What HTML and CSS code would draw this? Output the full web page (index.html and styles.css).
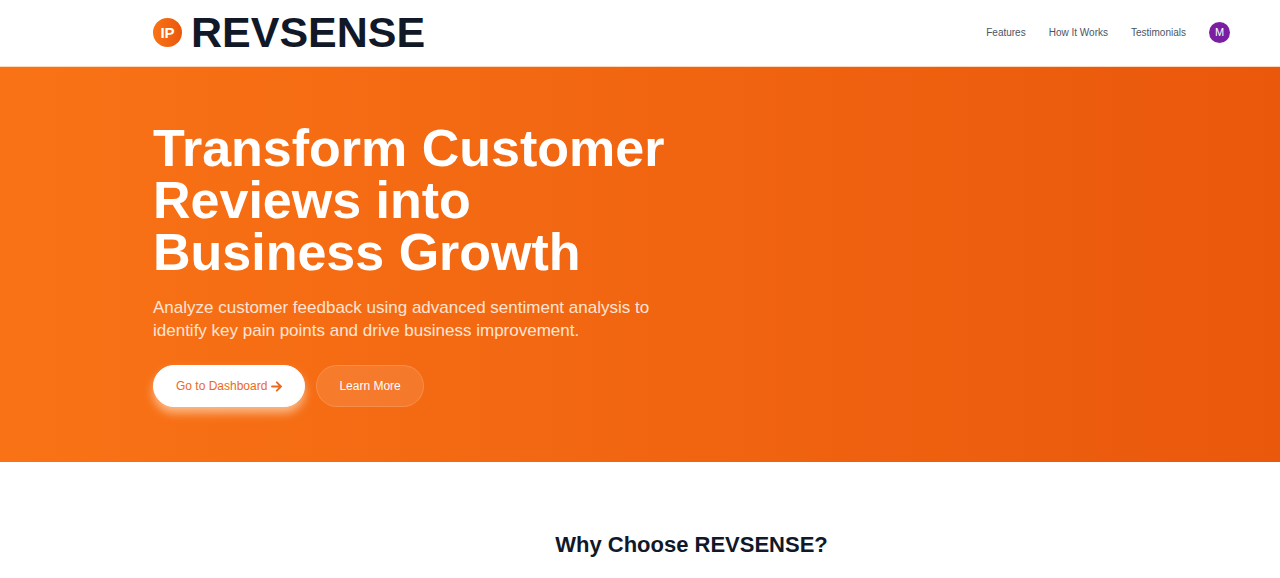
FILE: index.html
```html
<!DOCTYPE html>
<html lang="en">
<head>
  <meta charset="utf-8">
  <meta name="viewport" content="width=device-width, initial-scale=1">
  <title>REVSENSE</title>
  <link rel="stylesheet" href="styles.css">
</head>
<body>
  <header class="site-header">
    <a class="brand" href="#">
      <span class="brand-mark">IP</span>
      <span class="brand-name">REVSENSE</span>
    </a>
    <nav class="site-nav" aria-label="Main">
      <a href="#features">Features</a>
      <a href="#how">How It Works</a>
      <a href="#testimonials">Testimonials</a>
      <button class="avatar" type="button" aria-label="Account, M">M</button>
    </nav>
  </header>
  <main>
    <section class="hero">
      <div class="hero-copy">
        <h1>Transform Customer Reviews into Business Growth</h1>
        <p>Analyze customer feedback using advanced sentiment analysis to identify key pain points and drive business improvement.</p>
        <div class="actions">
          <a class="button button-primary" href="#dashboard">Go to Dashboard
            <svg class="arrow" viewBox="0 0 11 11" aria-hidden="true"><path d="M1 5.500h9M5.800 1.300 10 5.500l-4.200 4.200"/></svg>
          </a>
          <a class="button button-ghost" href="#features">Learn More</a>
        </div>
      </div>
    </section>
    <section class="features" id="features">
      <h2>Why Choose REVSENSE?</h2>
    </section>
  </main>
</body>
</html>
```
FILE: styles.css
```css
* {
  box-sizing: border-box;
}

body {
  margin: 0;
  background: #fff;
  color: #111827;
  font-family: "Liberation Sans", Arial, sans-serif;
}

a {
  color: inherit;
  text-decoration: none;
}

.site-header,
.hero,
.features {
  padding-left: 153px;
  padding-right: 50px;
}

.site-header {
  display: flex;
  align-items: center;
  justify-content: space-between;
  padding-top: 8px;
  padding-bottom: 10px;
  border-bottom: 1px solid #fcd9bd;
}

.brand {
  display: flex;
  align-items: center;
  gap: 9px;
}

.brand-mark {
  display: grid;
  place-items: center;
  width: 29px;
  height: 29px;
  border-radius: 50%;
  background: linear-gradient(90deg, #f97316, #ea580c);
  color: #fff;
  font-size: 15px;
  font-weight: 700;
}

.brand-name {
  font-size: 43px;
  font-weight: 700;
  line-height: 48px;
}

.site-nav {
  display: flex;
  align-items: center;
  gap: 23px;
  color: #4b5563;
  font-size: 10px;
}

.avatar {
  width: 21px;
  height: 21px;
  padding: 0;
  border: 0;
  border-radius: 50%;
  background: #7b1fa2;
  color: #fff;
  font: inherit;
  font-size: 11px;
}

.hero {
  padding-top: 55px;
  padding-bottom: 55px;
  background: linear-gradient(90deg, #f97316, #ea580c);
  color: #fff;
}

.hero-copy {
  max-width: 527px;
}

h1 {
  margin: 0 0 18px;
  font-size: 52px;
  line-height: 52px;
}

.hero p {
  margin: 0 0 23px;
  color: #ffe4d5;
  font-size: 17px;
  line-height: 23px;
}

.actions {
  display: flex;
  gap: 11px;
}

.button {
  display: flex;
  align-items: center;
  gap: 4px;
  height: 42px;
  padding: 0 22px;
  border: 1px solid transparent;
  border-radius: 22px;
  font-size: 12px;
}

.button-primary {
  border-color: #fff;
  background: #fff;
  color: #ea6a1c;
  box-shadow: 0 6px 10px rgba(255, 237, 213, 0.6);
}

.button-ghost {
  border-color: rgba(255, 255, 255, 0.15);
  background: rgba(255, 255, 255, 0.1);
}

.arrow {
  width: 11px;
  height: 11px;
  fill: none;
  stroke: currentColor;
  stroke-width: 1.8;
  stroke-linecap: round;
  stroke-linejoin: round;
}

.features {
  padding-top: 68px;
  padding-bottom: 18px;
}

h2 {
  margin: 0;
  font-size: 22px;
  line-height: 29px;
  text-align: center;
}
```
